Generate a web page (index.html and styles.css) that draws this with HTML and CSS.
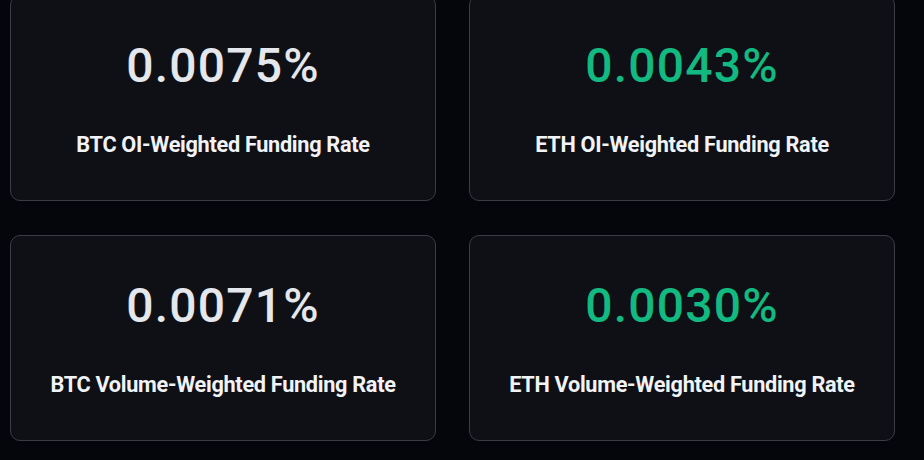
FILE: index.html
```html
<!DOCTYPE html>
<html lang="en">
<head>
  <meta charset="UTF-8">
  <meta name="viewport" content="width=device-width, initial-scale=1.0">
  <title>Funding Rates</title>
  <link rel="stylesheet" href="styles.css">
</head>
<body>

<section class="rates">
  <div class="rate-card">
    <div class="rate-value">0.0075%</div>
    <div class="rate-label">BTC OI-Weighted Funding Rate</div>
  </div>
  <div class="rate-card">
    <div class="rate-value up">0.0043%</div>
    <div class="rate-label">ETH OI-Weighted Funding Rate</div>
  </div>
  <div class="rate-card">
    <div class="rate-value">0.0071%</div>
    <div class="rate-label">BTC Volume-Weighted Funding Rate</div>
  </div>
  <div class="rate-card">
    <div class="rate-value up">0.0030%</div>
    <div class="rate-label">ETH Volume-Weighted Funding Rate</div>
  </div>
</section>

</body>
</html>
```

FILE: styles.css
```css
body {
  margin: 0;
  padding: 0;
  background-color: #05050c;
  font-family: Roboto, "Liberation Sans", sans-serif;
}

/* grid de tarjetas */
.rates {
  display: grid;
  grid-template-columns: 426px 426px;
  column-gap: 33px;
  row-gap: 34px;
  margin-top: -5px;
  padding-left: 10px;
}

.rate-card {
  box-sizing: border-box;
  height: 206px;
  padding-top: 46px;
  background-color: #0e1016;
  border: 1.5px solid #3a3d45;
  border-radius: 10px;
  text-align: center;
}

.rate-value {
  font-size: 48px;
  line-height: 48px;
  font-weight: 500;
  letter-spacing: 1.2px;
  color: #e4e7ec;
}

.rate-value.up {
  color: #12b981;
}

.rate-label {
  margin-top: 43px;
  font-size: 21.7px;
  line-height: 24px;
  font-weight: 700;
  letter-spacing: -0.3px;
  color: #f1f3f6;
}
```
